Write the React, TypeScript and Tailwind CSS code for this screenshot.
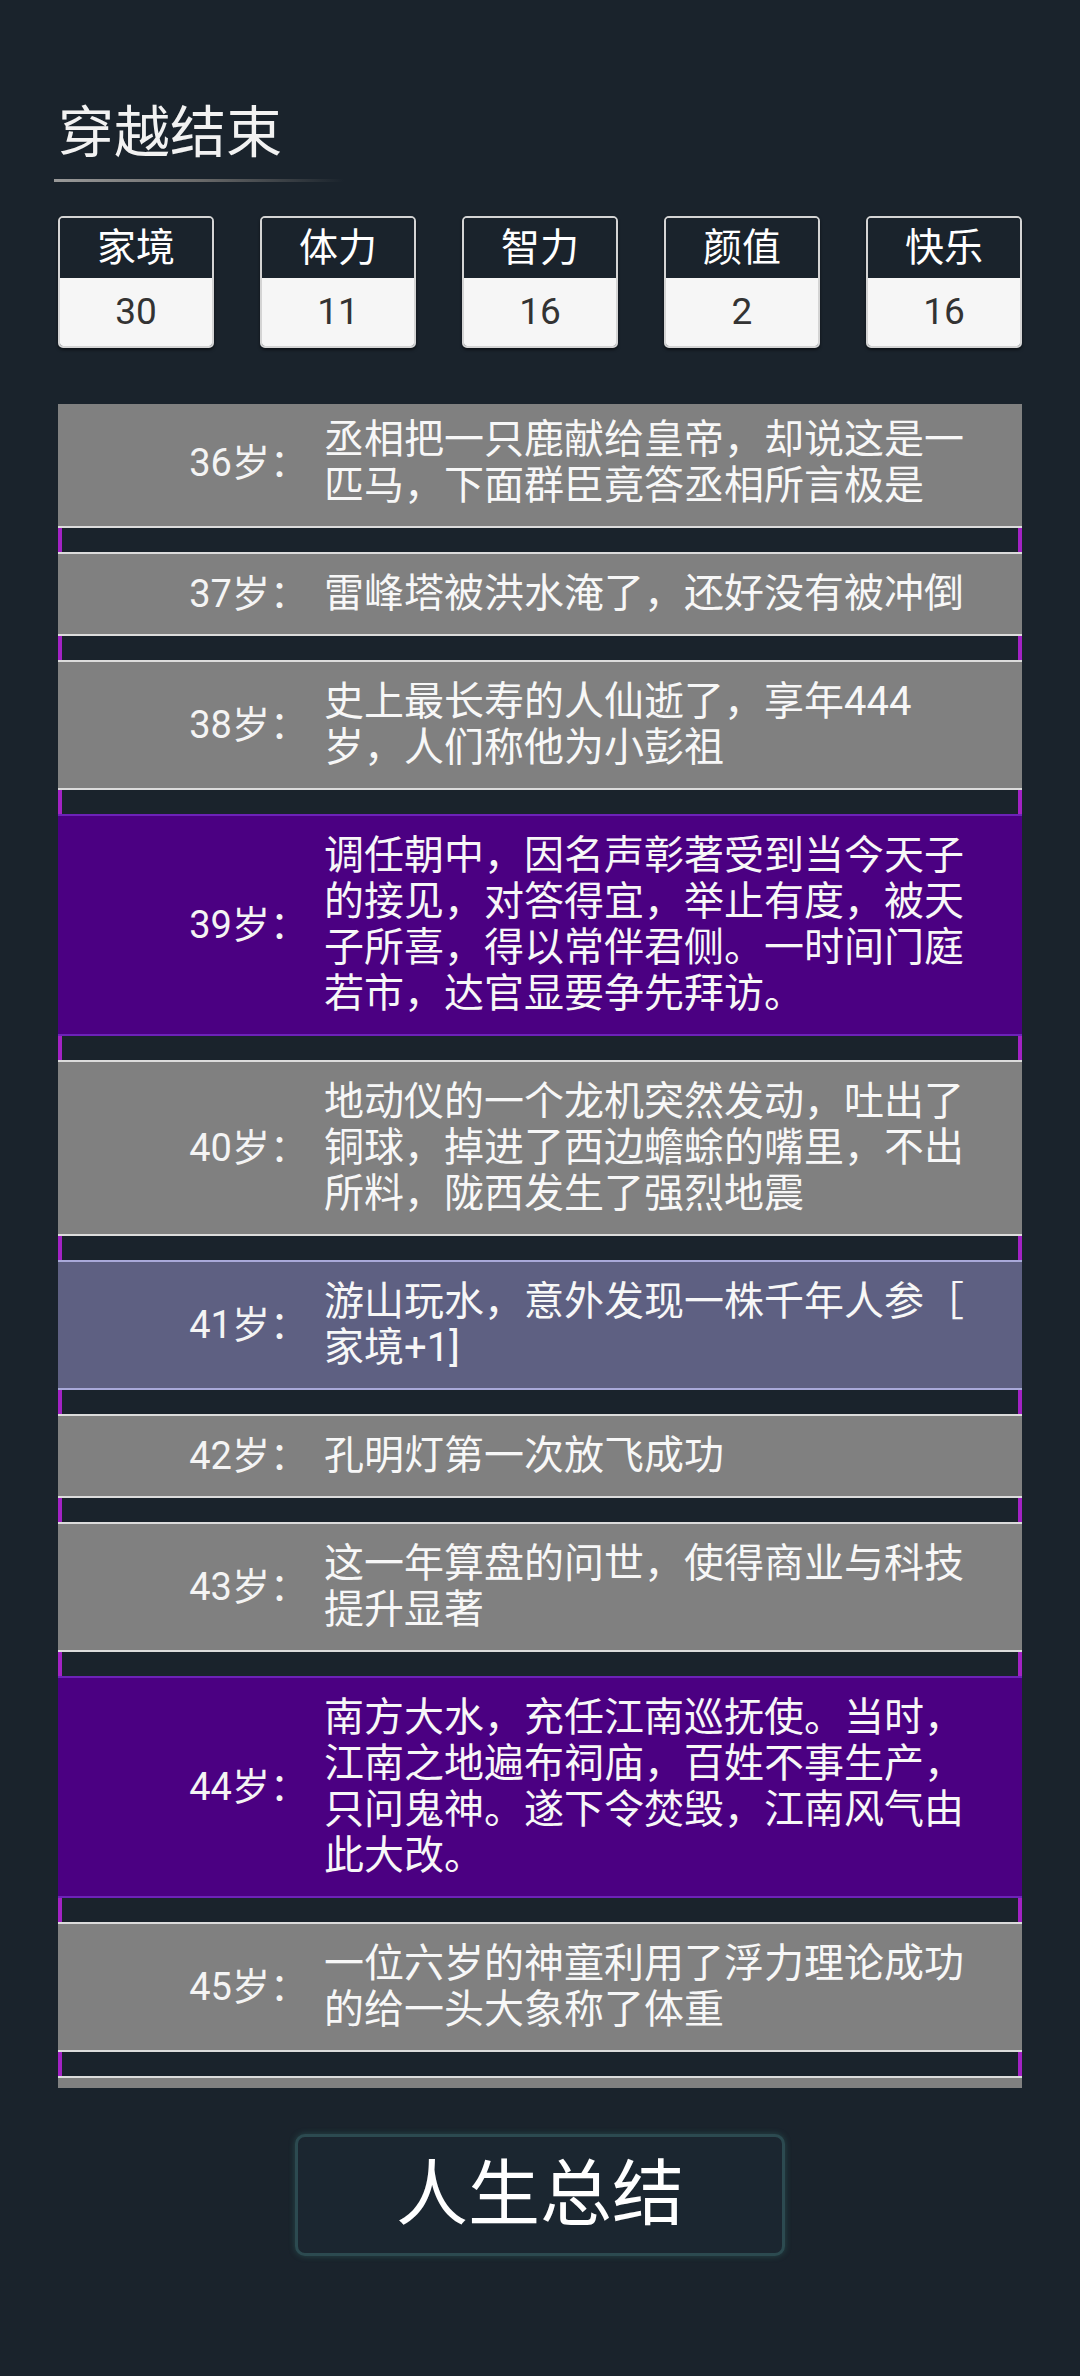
import React from "react"

type Kind = "normal" | "special" | "gain"

const stats = [
  { name: "家境", value: 30 },
  { name: "体力", value: 11 },
  { name: "智力", value: 16 },
  { name: "颜值", value: 2 },
  { name: "快乐", value: 16 },
]

const events: { age: number; kind: Kind; lines: string[] }[] = [
  { age: 36, kind: "normal", lines: ["丞相把一只鹿献给皇帝，却说这是一", "匹马，下面群臣竟答丞相所言极是"] },
  { age: 37, kind: "normal", lines: ["雷峰塔被洪水淹了，还好没有被冲倒"] },
  { age: 38, kind: "normal", lines: ["史上最长寿的人仙逝了，享年444", "岁，人们称他为小彭祖"] },
  {
    age: 39,
    kind: "special",
    lines: [
      "调任朝中，因名声彰著受到当今天子",
      "的接见，对答得宜，举止有度，被天",
      "子所喜，得以常伴君侧。一时间门庭",
      "若市，达官显要争先拜访。",
    ],
  },
  {
    age: 40,
    kind: "normal",
    lines: ["地动仪的一个龙机突然发动，吐出了", "铜球，掉进了西边蟾蜍的嘴里，不出", "所料，陇西发生了强烈地震"],
  },
  { age: 41, kind: "gain", lines: ["游山玩水，意外发现一株千年人参［", "家境+1]"] },
  { age: 42, kind: "normal", lines: ["孔明灯第一次放飞成功"] },
  { age: 43, kind: "normal", lines: ["这一年算盘的问世，使得商业与科技", "提升显著"] },
  {
    age: 44,
    kind: "special",
    lines: [
      "南方大水，充任江南巡抚使。当时，",
      "江南之地遍布祠庙，百姓不事生产，",
      "只问鬼神。遂下令焚毁，江南风气由",
      "此大改。",
    ],
  },
  { age: 45, kind: "normal", lines: ["一位六岁的神童利用了浮力理论成功", "的给一头大象称了体重"] },
]

const kindClass: Record<Kind, string> = {
  normal: "bg-[#808080] border-[#dcdcdc]",
  special: "bg-[#4b0082] border-[#6d22b8]",
  gain: "bg-[#5e6082] border-[#a9a9da]",
}

function Spacer() {
  return <div className="h-[24px] border-l-[4px] border-r-[4px] border-[#a322c4]" />
}

export default function App() {
  return (
    <div className="w-[1080px] min-h-[2376px] bg-[#1a232c] text-white font-[Roboto,'Noto_Sans_CJK_SC',sans-serif] px-[58px]">
      {/* 标题 */}
      <div className="pt-[104px]">
        <h1 className="text-[56px] leading-[58px] text-[#f2f2f2] font-normal">穿越结束</h1>
        <div className="mt-[17px] h-[3px] w-[290px] -ml-[4px] bg-gradient-to-r from-[#9a9a9a] via-[#6a6a6a] to-transparent" />
      </div>

      {/* 属性 */}
      <div className="mt-[34px] flex justify-between">
        {stats.map((s) => (
          <div
            key={s.name}
            className="w-[156px] h-[132px] rounded-[5px] border-2 border-[#d4d4d4] overflow-hidden flex flex-col shadow-[0_2px_3px_rgba(0,0,0,0.5)]"
          >
            <div className="h-[60px] flex items-center justify-center text-[39px] text-white bg-[#1a232c]">
              {s.name}
            </div>
            <div className="flex-1 flex items-center justify-center text-[37px] text-[#333] bg-[#f6f6f6]">
              {s.value}
            </div>
          </div>
        ))}
      </div>

      {/* 经历 */}
      <div className="mt-[56px] h-[1684px] overflow-hidden">
        <div className="-mt-[6px]">
          {events.map((e) => (
            <div key={e.age}>
              <div className={`flex items-center border-y-2 py-[17px] ${kindClass[e.kind]}`}>
                <div className="w-[252px] shrink-0 text-right text-[38px] leading-[46px] text-[#f4f4f4] pr-[2px]">
                  {e.age}岁：
                </div>
                <div className="ml-[14px] text-[40px] leading-[46px] text-[#f7f7f7]">
                  {e.lines.map((l, i) => (
                    <div key={i} className="whitespace-nowrap">
                      {l}
                    </div>
                  ))}
                </div>
              </div>
              <Spacer />
            </div>
          ))}
          <div className="h-[40px] border-t-2 border-[#dcdcdc] bg-[#808080]" />
        </div>
      </div>

      {/* 按钮 */}
      <div className="mt-[46px] flex justify-center">
        <button className="w-[490px] h-[122px] rounded-[10px] border-[3px] border-[#2c4a50] bg-[#1b2630] shadow-[0_0_6px_rgba(60,140,130,0.35)] text-[72px] text-white">
          人生总结
        </button>
      </div>
    </div>
  )
}
